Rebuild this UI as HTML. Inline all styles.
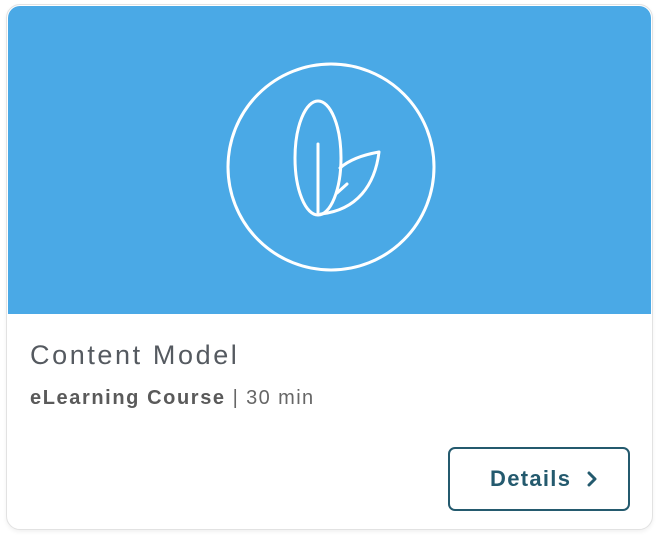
<!DOCTYPE html>
<html><head><style>
body{margin:0;width:658px;height:538px;background:#fff;font-family:"Liberation Sans",sans-serif;overflow:hidden}
.card{position:absolute;left:6px;top:4px;width:645px;height:524px;border:1px solid #e2e2e2;border-radius:14px;overflow:hidden;background:#fff;box-shadow:0 2px 4px rgba(0,0,0,0.06)}
.hero{position:absolute;left:1px;top:1px;width:643px;height:308px;background:#4aa9e6;border-radius:12px 12px 0 0}
.title{position:absolute;left:23px;top:335px;font-size:27px;color:#555a60;letter-spacing:2.6px}
.sub{position:absolute;left:23px;top:382px;font-size:20px;color:#666;letter-spacing:1.4px}
.sub b{color:#5a5a5a;letter-spacing:1.6px}
.btn{position:absolute;left:441px;top:442px;width:178px;height:60px;border:2px solid #245a6e;border-radius:7px;color:#245a6e;font-weight:bold;font-size:22px;line-height:60px;text-align:left;box-sizing:content-box;letter-spacing:1.3px}
.btn span{position:absolute;left:40px;top:0}
</style></head><body>
<div class="card">
<div class="hero"></div>
<svg style="position:absolute;left:0;top:0" width="645" height="320">
<g fill="none" stroke="#fff" stroke-width="3" stroke-linecap="round" stroke-linejoin="round">
<circle cx="324" cy="162" r="103"/>
<ellipse cx="311" cy="153" rx="23" ry="57"/>
<line x1="311" y1="139" x2="311" y2="208"/>
<path d="M314 209 C350 205 368 180 372 147 C355 150 342 155 333 163"/>
<line x1="330" y1="188" x2="340" y2="179"/>
</g></svg>
<div class="title">Content Model</div>
<div class="sub"><b>eLearning Course</b> | 30 min</div>
<div class="btn"><span>Details</span>
<svg style="position:absolute;left:135px;top:22px" width="14" height="16"><path d="M4 2 L10 8 L4 14" fill="none" stroke="#245a6e" stroke-width="3" stroke-linecap="round" stroke-linejoin="round"/></svg></div>
</div>
</body></html>
